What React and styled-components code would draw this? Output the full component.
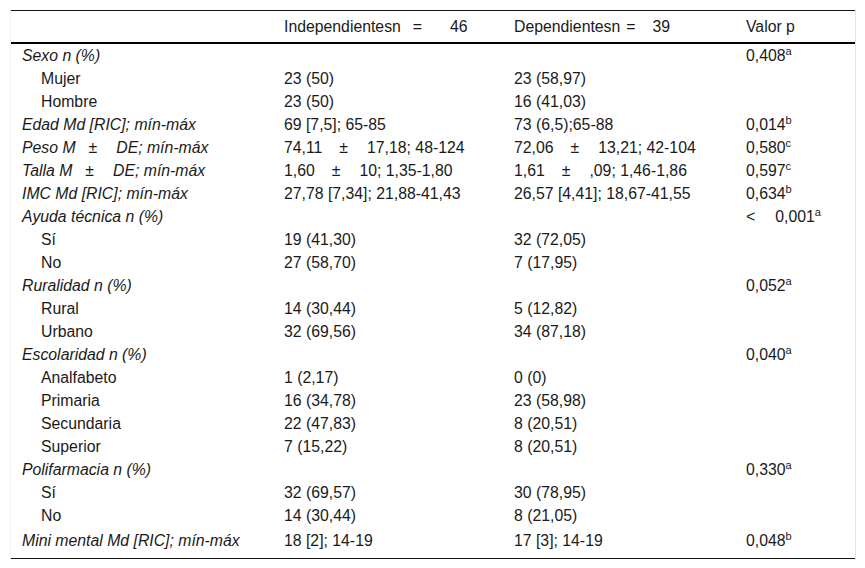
import React from 'react';
import styled, { createGlobalStyle } from 'styled-components';

const GlobalStyle = createGlobalStyle`
  body {
    margin: 0;
    background: #fff;
    font-family: "Liberation Sans", Arial, sans-serif;
    color: #1a1a1a;
  }
`;

const Frame = styled.div`
  margin: 10px 0 0 10px;
  width: 844px;
  border-left: 1px solid #f2f2f2;
  border-right: 1px solid #e4e4e4;
  padding-bottom: 1px;
`;

const Table = styled.table`
  width: 844px;
  border-collapse: collapse;
  table-layout: fixed;
  font-size: 15.8px;
  border-top: 1px solid #111;
  border-bottom: 1px solid #111;
`;

const HeadCell = styled.th`
  text-align: left;
  font-weight: normal;
  height: 31px;
  padding: 0 0 0 10px;
  border-bottom: 2px solid #000;
  white-space: nowrap;
`;

const Row = styled.tr`
  &:last-child td {
    height: 27px;
    padding-bottom: 4px;
  }
`;

const Cell = styled.td`
  height: 23px;
  line-height: 18px;
  padding: 0 0 0 ${(p) => (p.$indent ? 30 : p.$first ? 11 : 10)}px;
  font-style: ${(p) => (p.$italic ? 'italic' : 'normal')};
  white-space: nowrap;
  vertical-align: middle;
`;

const Gap = styled.span`
  display: inline-block;
  width: ${(p) => p.$w}px;
`;

const Sup = styled.sup`
  font-size: 11px;
  line-height: 0;
  vertical-align: 6px;
`;

const rows = [
  { label: 'Sexo n (%)', group: true, p: '0,408', s: 'a' },
  { label: 'Mujer', a: '23 (50)', b: '23 (58,97)' },
  { label: 'Hombre', a: '23 (50)', b: '16 (41,03)' },
  { label: 'Edad Md [RIC]; mín-máx', group: true, a: '69 [7,5]; 65-85', b: '73 (6,5);65-88', p: '0,014', s: 'b' },
  { label: 'pm', group: true, name: 'Peso', a: ['74,11', '17,18; 48-124'], b: ['72,06', '13,21; 42-104'], p: '0,580', s: 'c' },
  { label: 'pm', group: true, name: 'Talla', a: ['1,60', '10; 1,35-1,80'], b: ['1,61', ',09; 1,46-1,86'], p: '0,597', s: 'c' },
  { label: 'IMC Md [RIC]; mín-máx', group: true, a: '27,78 [7,34]; 21,88-41,43', b: '26,57 [4,41]; 18,67-41,55', p: '0,634', s: 'b' },
  { label: 'Ayuda técnica n (%)', group: true, p: 'lt', s: 'a' },
  { label: 'Sí', a: '19 (41,30)', b: '32 (72,05)' },
  { label: 'No', a: '27 (58,70)', b: '7 (17,95)' },
  { label: 'Ruralidad n (%)', group: true, p: '0,052', s: 'a' },
  { label: 'Rural', a: '14 (30,44)', b: '5 (12,82)' },
  { label: 'Urbano', a: '32 (69,56)', b: '34 (87,18)' },
  { label: 'Escolaridad n (%)', group: true, p: '0,040', s: 'a' },
  { label: 'Analfabeto', a: '1 (2,17)', b: '0 (0)' },
  { label: 'Primaria', a: '16 (34,78)', b: '23 (58,98)' },
  { label: 'Secundaria', a: '22 (47,83)', b: '8 (20,51)' },
  { label: 'Superior', a: '7 (15,22)', b: '8 (20,51)' },
  { label: 'Polifarmacia n (%)', group: true, p: '0,330', s: 'a' },
  { label: 'Sí', a: '32 (69,57)', b: '30 (78,95)' },
  { label: 'No', a: '14 (30,44)', b: '8 (21,05)' },
  { label: 'Mini mental Md [RIC]; mín-máx', group: true, a: '18 [2]; 14-19', b: '17 [3]; 14-19', p: '0,048', s: 'b' },
];

const PlusMinus = ({ left, right, before = 17, after = 19 }) => (
  <>
    {left}
    <Gap $w={before} />±<Gap $w={after} />
    {right}
  </>
);

const Value = ({ v }) => {
  if (!v) return null;
  if (Array.isArray(v)) return <PlusMinus left={v[0]} right={v[1]} />;
  return v;
};

const PValue = ({ p, s }) => {
  if (!p) return null;
  if (p === 'lt')
    return (
      <>
        &lt;<Gap $w={20} />0,001<Sup>{s}</Sup>
      </>
    );
  return (
    <>
      {p}
      <Sup>{s}</Sup>
    </>
  );
};

export default function App() {
  return (
    <>
      <GlobalStyle />
      <Frame>
        <Table>
          <colgroup>
            <col style={{ width: 263 }} />
            <col style={{ width: 230 }} />
            <col style={{ width: 232 }} />
            <col style={{ width: 119 }} />
          </colgroup>
          <thead>
            <tr>
              <HeadCell />
              <HeadCell>
                Independientesn<Gap $w={12} />=<Gap $w={28} />46
              </HeadCell>
              <HeadCell>
                Dependientesn<Gap $w={6} />=<Gap $w={17} />39
              </HeadCell>
              <HeadCell>Valor p</HeadCell>
            </tr>
          </thead>
          <tbody>
            {rows.map((r, i) => (
              <Row key={i}>
                <Cell $first $indent={!r.group} $italic={r.group}>
                  {r.label === 'pm' ? (
                    <PlusMinus left={`${r.name} M`} right="DE; mín-máx" before={13} after={19} />
                  ) : (
                    r.label
                  )}
                </Cell>
                <Cell>
                  <Value v={r.a} />
                </Cell>
                <Cell>
                  <Value v={r.b} />
                </Cell>
                <Cell>
                  <PValue p={r.p} s={r.s} />
                </Cell>
              </Row>
            ))}
          </tbody>
        </Table>
      </Frame>
    </>
  );
}
